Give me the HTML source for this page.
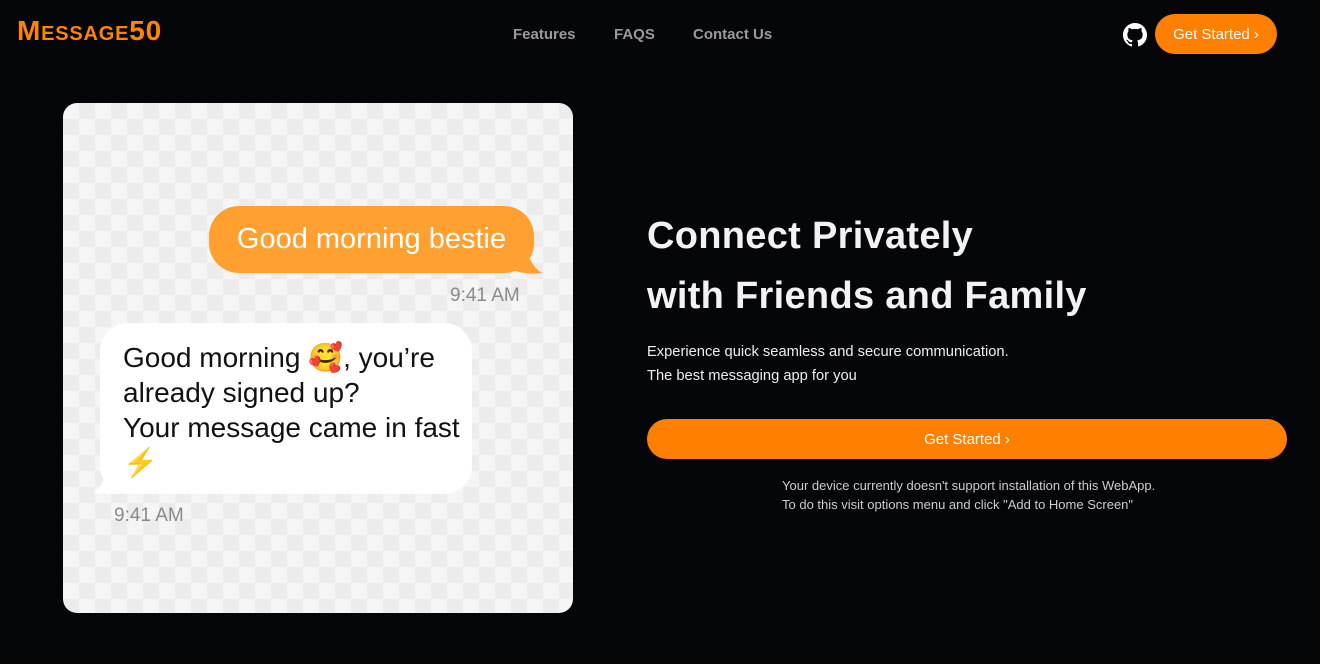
<!DOCTYPE html>
<html><head><style>
body{margin:0;width:1320px;height:664px;background:#05060a;font-family:"Liberation Sans",sans-serif;position:relative;overflow:hidden;color:#fff}
.logo{position:absolute;left:17px;top:15px;color:#ff8400;font-weight:bold;font-size:28px;font-variant:small-caps;letter-spacing:0.8px}
.nav{position:absolute;top:26px;font-size:15px;color:#9a9a9a;font-weight:bold}
.btn{position:absolute;background:#ff8000;color:#fff;border-radius:16px;font-size:15px;text-align:center}
.card{position:absolute;left:63px;top:103px;width:510px;height:510px;border-radius:14px;overflow:hidden;
background-color:#f5f5f5;background-image:linear-gradient(45deg,#ececec 25%,transparent 25%,transparent 75%,#ececec 75%),linear-gradient(45deg,#ececec 25%,transparent 25%,transparent 75%,#ececec 75%);background-size:32px 32px;background-position:0 0,16px 16px}
.b1{position:absolute;left:146px;top:103px;width:325px;height:67px;background:#ffa030;border-radius:30px;color:#fff;font-size:29px;line-height:67px;text-align:center}
.b2{position:absolute;left:37px;top:220px;width:372px;height:171px;background:#fff;border-radius:28px;color:#111;font-size:28px;line-height:35px;box-sizing:border-box;padding:17px 0 0 23px}
.t{position:absolute;color:#8a8a8a;font-size:19px}
h1{position:absolute;left:647px;top:206px;margin:0;font-size:38px;line-height:60px;font-weight:bold;color:#f2f2f2;letter-spacing:0.3px}
</style></head><body>
<div class="logo">Message50</div>
<div class="nav" style="left:513px">Features</div>
<div class="nav" style="left:614px">FAQS</div>
<div class="nav" style="left:693px">Contact Us</div>
<svg style="position:absolute;left:1123px;top:23px" width="24" height="24" viewBox="0 0 16 16"><path fill="#fff" d="M8 0C3.58 0 0 3.58 0 8c0 3.54 2.29 6.53 5.47 7.59.4.07.55-.17.55-.38v-1.33c-2.23.48-2.7-1.07-2.7-1.07-.36-.93-.89-1.17-.89-1.17-.73-.5.05-.49.05-.49.8.06 1.23.82 1.23.82.72 1.22 1.87.87 2.33.66.07-.52.28-.87.5-1.07-1.78-.2-3.64-.89-3.64-3.95 0-.87.31-1.59.82-2.15-.08-.2-.36-1.02.08-2.12 0 0 .67-.21 2.2.82a7.5 7.5 0 0 1 4 0c1.53-1.04 2.2-.82 2.2-.82.44 1.1.16 1.92.08 2.12.51.56.82 1.27.82 2.15 0 3.07-1.87 3.75-3.65 3.95.29.25.54.73.54 1.48v2.2c0 .21.15.46.55.38A8 8 0 0 0 16 8c0-4.42-3.58-8-8-8z"/></svg>
<div class="btn" style="left:1155px;top:14px;width:122px;height:40px;line-height:42px;border-radius:20px">Get Started ›</div>
<div class="card">
<svg style="position:absolute;left:440px;top:140px" width="40" height="32"><path d="M0 0 L22 0 Q26 22 39 30 Q20 32 8 26 Z" fill="#ffa030"/></svg>
<div class="b1">Good morning bestie</div>
<div class="t" style="left:387px;top:182px">9:41 AM</div>
<svg style="position:absolute;left:28px;top:356px" width="40" height="36"><path d="M18 0 L40 0 L40 34 Q20 36 2 34 Q14 28 18 0 Z" fill="#fff"/></svg>
<div class="b2">Good morning 🥰, you’re<br>already signed up?<br>Your message came in fast<br><span style="color:#f5a623">⚡</span></div>
<div class="t" style="left:51px;top:402px">9:41 AM</div>
</div>
<h1>Connect Privately<br>with Friends and Family</h1>
<div style="position:absolute;left:647px;top:340px;font-size:14.7px;line-height:24px;color:#eee">Experience quick seamless and secure communication.<br>The best messaging app for you</div>
<div class="btn" style="left:647px;top:419px;width:640px;height:40px;line-height:42px;border-radius:20px">Get Started ›</div>
<div style="position:absolute;left:782px;top:476px;font-size:13px;line-height:19px;color:#ccc">Your device currently doesn't support installation of this WebApp.<br>To do this visit options menu and click "Add to Home Screen"</div>
</body></html>
